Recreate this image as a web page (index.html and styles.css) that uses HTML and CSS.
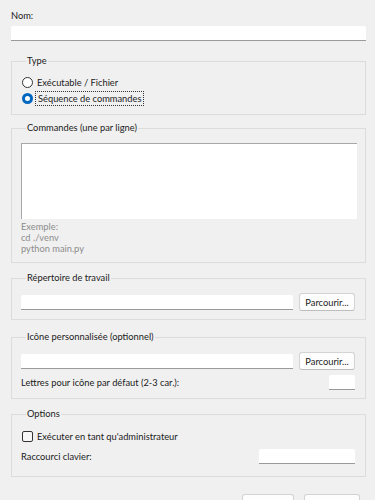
FILE: index.html
```html
<!DOCTYPE html>
<html lang="fr">
<head>
  <meta charset="UTF-8">
  <meta name="viewport" content="width=device-width, initial-scale=1.0">
  <title>Nouveau raccourci</title>
  <link rel="stylesheet" href="styles.css">
</head>
<body>
  <div class="dialog">
    <label class="field-label" for="name">Nom:</label>
    <input class="textbox name-box" id="name" type="text">

    <fieldset class="group type-group">
      <legend>Type</legend>
      <label class="choice"><input type="radio" name="kind"> Exécutable / Fichier</label>
      <label class="choice"><input type="radio" name="kind" checked> <span class="focus">Séquence de commandes</span></label>
    </fieldset>

    <fieldset class="group cmd-group">
      <legend>Commandes (une par ligne)</legend>
      <textarea class="commands"></textarea>
      <div class="hint">Exemple:<br>cd ./venv<br>python main.py</div>
    </fieldset>

    <fieldset class="group">
      <legend>Répertoire de travail</legend>
      <div class="browse-row">
        <input class="textbox grow" type="text">
        <button class="btn browse">Parcourir...</button>
      </div>
    </fieldset>

    <fieldset class="group icon-group">
      <legend>Icône personnalisée (optionnel)</legend>
      <div class="browse-row">
        <input class="textbox grow" type="text">
        <button class="btn browse">Parcourir...</button>
      </div>
      <div class="pair-row">
        <span>Lettres pour icône par défaut (2-3 car.):</span>
        <input class="textbox letters" type="text">
      </div>
    </fieldset>

    <fieldset class="group options-group">
      <legend>Options</legend>
      <label class="choice"><input type="checkbox"> Exécuter en tant qu'administrateur</label>
      <div class="pair-row hotkey-row">
        <span>Raccourci clavier:</span>
        <input class="textbox hotkey" type="text">
      </div>
    </fieldset>

    <div class="actions">
      <button class="btn save">Enregistrer</button>
      <button class="btn cancel">Annuler</button>
    </div>
  </div>
</body>
</html>
```

FILE: styles.css
```css
/* dialog look */
body {
  margin: 0;
  padding: 0;
  background-color: #f0f0f0;
  color: #1b1b1b;
  font-family: Lato, 'Liberation Sans', sans-serif;
  font-size: 9.3px;
}

.dialog {
  padding: 10px 9px 0 11px;
}

.field-label {
  display: block;
  line-height: 12px;
}

.textbox {
  box-sizing: border-box;
  height: 15px;
  margin: 0;
  padding: 0 3px;
  border: none;
  border-bottom: 1px solid #9a9a9a;
  border-radius: 2px 2px 0 0;
  background-color: #fff;
  font: inherit;
  outline: none;
}

.name-box {
  display: block;
  width: 100%;
  margin-top: 4px;
}

.group {
  margin: 9px 0 0;
  padding: 8px 8px 8px 9px;
  border: 1px solid #dcdcdc;
  min-width: 0;
}

.group legend {
  padding: 0 1px;
  margin-left: 5px;
  line-height: 12px;
  color: #1b1b1b;
}

.type-group {
  margin-top: 14px;
  padding-top: 7px;
}

.cmd-group {
  margin-top: 7px;
}

.icon-group {
  margin-top: 11px;
}

.choice {
  display: flex;
  align-items: center;
  height: 16px;
  gap: 4px;
}

.choice input {
  appearance: none;
  margin: 0 0 0 1px;
  width: 11px;
  height: 11px;
  border: 1px solid #333;
  background-color: #fff;
  box-sizing: border-box;
}

.choice input[type="radio"] {
  border-radius: 50%;
}

.choice input[type="radio"]:checked {
  border: 3px solid #0067c0;
  background-color: #fff;
}

.choice input[type="checkbox"] {
  border-radius: 2px;
  background-color: #f7f7f7;
}

.focus {
  outline: 1px dotted #333;
  outline-offset: 1px;
  padding: 0 1px;
}

.commands {
  display: block;
  box-sizing: border-box;
  width: 100%;
  height: 76px;
  margin: 1px 0 0;
  border: none;
  border-top: 1px solid #a8a8a8;
  border-left: 1px solid #a8a8a8;
  background-color: #fff;
  resize: none;
}

.hint {
  margin-top: 2px;
  line-height: 11px;
  color: #8c8c8c;
}

.browse-row {
  display: flex;
  align-items: center;
  gap: 6px;
  padding-top: 1px;
}

.grow {
  flex: 1;
}

.btn {
  box-sizing: border-box;
  height: 18px;
  padding: 0;
  border: 1px solid #d3d3d3;
  border-bottom-color: #bdbdbd;
  border-radius: 3px;
  background-color: #fdfdfd;
  color: #1b1b1b;
  font: inherit;
}

.browse {
  width: 56px;
  margin-right: 2px;
}

.pair-row {
  display: flex;
  align-items: center;
  justify-content: space-between;
  height: 16px;
  margin-top: 4px;
}

.letters {
  width: 26px;
  margin-right: 2px;
}

.hotkey-row {
  margin-top: 4px;
}

.hotkey {
  width: 96px;
  margin-right: 2px;
}

.options-group {
  padding-bottom: 12px;
}

.actions {
  display: flex;
  justify-content: flex-end;
  gap: 10px;
  margin-top: 17px;
  padding-right: 6px;
}

.save {
  width: 52px;
}

.cancel {
  width: 56px;
}
```
